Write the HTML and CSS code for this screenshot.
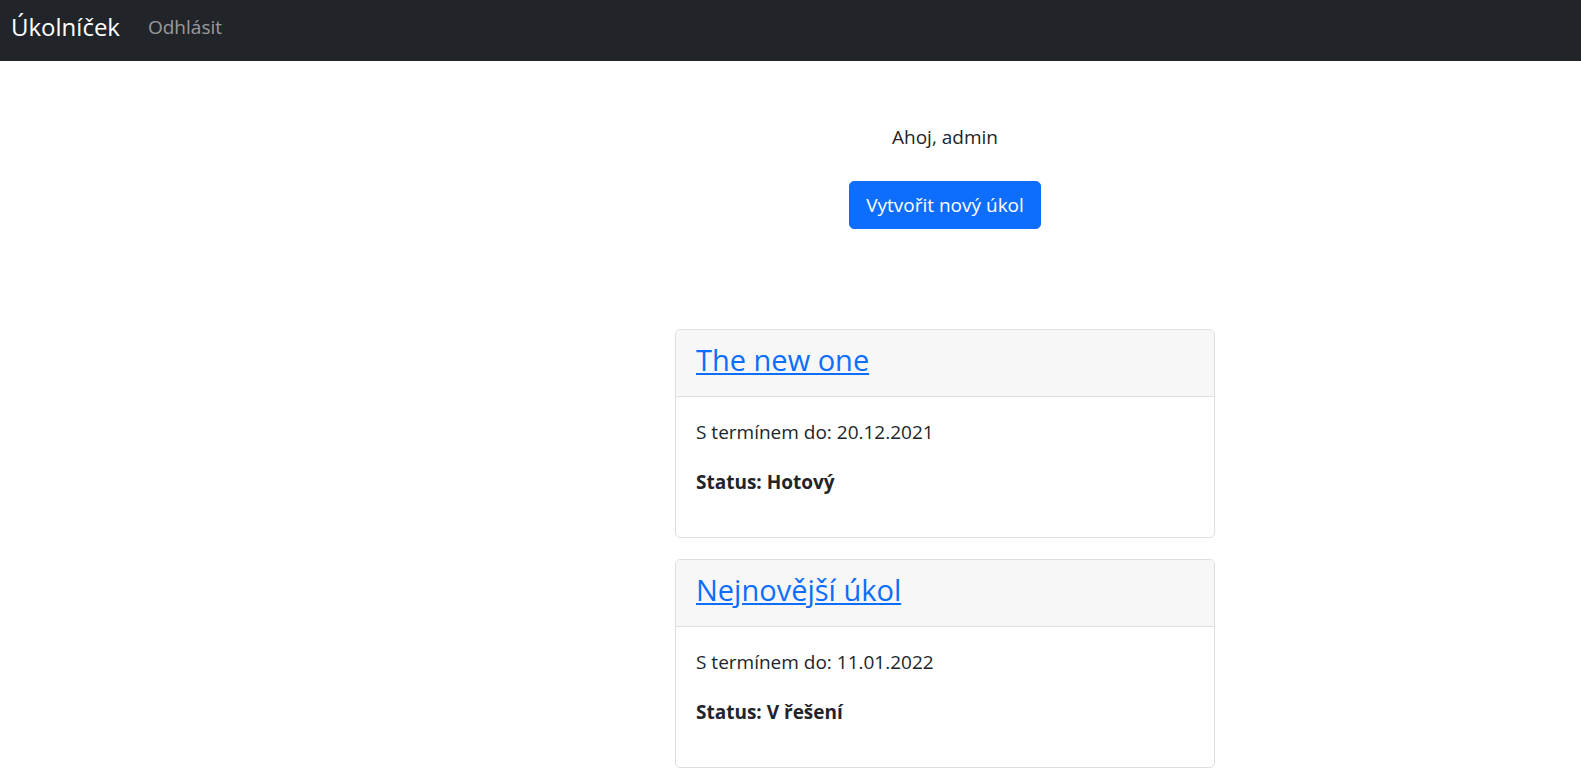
FILE: index.html
```html
<!DOCTYPE html>
<html lang="cs">
<head>
<meta charset="utf-8">
<title>Úkolníček</title>
<link rel="stylesheet" href="styles.css">
</head>
<body>
<nav class="navbar">
  <a class="brand" href="#">Úkolníček</a>
  <a class="nav-link" href="#">Odhlásit</a>
</nav>
<main class="main">
  <p class="greeting">Ahoj, admin</p>
  <a class="btn" href="#">Vytvořit nový úkol</a>
  <div class="tasks">
    <div class="card">
      <div class="card-header"><h4 class="card-title"><a href="#">The new one</a></h4></div>
      <div class="card-body">
        <p>S termínem do: 20.12.2021</p>
        <p class="status">Status: Hotový</p>
      </div>
    </div>
    <div class="card">
      <div class="card-header"><h4 class="card-title"><a href="#">Nejnovější úkol</a></h4></div>
      <div class="card-body">
        <p>S termínem do: 11.01.2022</p>
        <p class="status">Status: V řešení</p>
      </div>
    </div>
  </div>
</main>
</body>
</html>
```
FILE: styles.css
```css
* { box-sizing: border-box; }
body {
  margin: 0;
  font-family: "Open Sans", "Noto Sans", sans-serif;
  font-size: 19px;
  line-height: 30px;
  color: #212529;
  background: #fff;
}
.navbar {
  height: 61px;
  background: #212529;
  display: flex;
  align-items: center;
  padding: 0 11px 7px;
  gap: 28px;
}
.brand {
  color: #fff;
  font-size: 24px;
  text-decoration: none;
}
.nav-link {
  color: rgba(255,255,255,0.55);
  font-size: 19px;
  text-decoration: none;
}
.main {
  padding-left: 309px;
  display: flex;
  flex-direction: column;
  align-items: center;
}
.greeting {
  margin: 61px 0 0;
  line-height: 30px;
}
.btn {
  margin-top: 29px;
  background: #0d6efd;
  color: #fff;
  text-decoration: none;
  border: 1px solid #0d6efd;
  border-radius: 5px;
  padding: 8px 16px;
  line-height: 30px;
}
.tasks {
  margin-top: 100px;
  width: 540px;
  display: flex;
  flex-direction: column;
  gap: 21px;
}
.card {
  border: 1px solid #dfdfdf;
  border-radius: 5px;
  overflow: hidden;
}
.card-header {
  background: #f7f7f7;
  border-bottom: 1px solid #dfdfdf;
  padding: 10px 20px;
}
.card-title {
  margin: 2px 0 8px;
  font-size: 29px;
  font-weight: 500;
  line-height: 36px;
}
.card-title a {
  color: #0d6efd;
}
.card-body {
  padding: 20px;
}
.card-body p {
  margin: 0 0 20px;
}
.status {
  font-weight: 700;
}
```
